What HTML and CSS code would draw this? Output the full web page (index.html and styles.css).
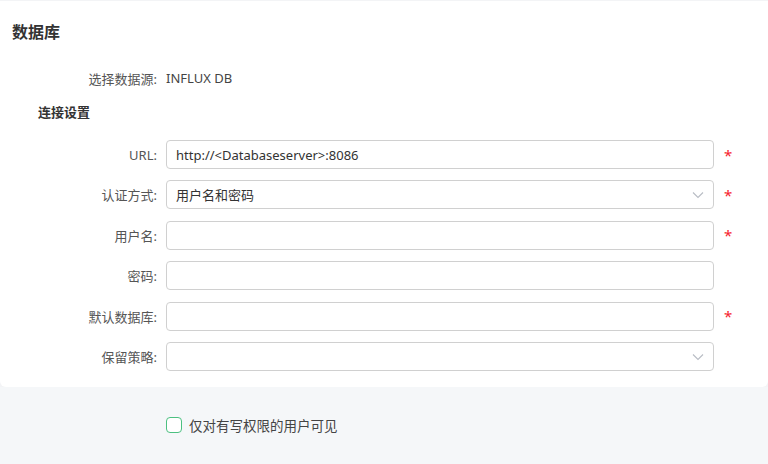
FILE: index.html
```html
<!DOCTYPE html>
<html>
<head>
<meta charset="utf-8">
<link rel="stylesheet" href="styles.css">
</head>
<body>
<div class="page">
  <div class="card">
    <h2 class="title">数据库</h2>
    <div class="source-row">
      <span class="label">选择数据源:</span>
      <span class="source-value">INFLUX DB</span>
    </div>
    <h3 class="section">连接设置</h3>
    <div class="form">
      <div class="row">
        <span class="label">URL:</span>
        <div class="input"><span class="value">http://&lt;Databaseserver&gt;:8086</span></div>
        <span class="req">*</span>
      </div>
      <div class="row">
        <span class="label">认证方式:</span>
        <div class="input select"><span class="value">用户名和密码</span>
          <svg class="arrow" width="12" height="8" viewBox="0 0 12 8"><path d="M1 1.5 L6 6.5 L11 1.5" fill="none" stroke="#b8bcc4" stroke-width="1.1"/></svg>
        </div>
        <span class="req">*</span>
      </div>
      <div class="row">
        <span class="label">用户名:</span>
        <div class="input"></div>
        <span class="req">*</span>
      </div>
      <div class="row">
        <span class="label">密码:</span>
        <div class="input"></div>
        <span class="req"></span>
      </div>
      <div class="row">
        <span class="label">默认数据库:</span>
        <div class="input"></div>
        <span class="req">*</span>
      </div>
      <div class="row">
        <span class="label">保留策略:</span>
        <div class="input select">
          <svg class="arrow" width="12" height="8" viewBox="0 0 12 8"><path d="M1 1.5 L6 6.5 L11 1.5" fill="none" stroke="#b8bcc4" stroke-width="1.1"/></svg>
        </div>
        <span class="req"></span>
      </div>
    </div>
  </div>
  <div class="footer">
    <label class="check"><span class="box"></span><span class="check-text">仅对有写权限的用户可见</span></label>
  </div>
</div>
</body>
</html>
```
FILE: styles.css
```css
* { box-sizing: border-box; }
html, body { margin: 0; padding: 0; }
body {
  background: #f5f7f9;
  font-family: "Noto Sans", "Noto Sans CJK SC", sans-serif;
  font-size: 13px;
  color: #333;
}
.page { width: 768px; height: 464px; padding-top: 1px; background: #f3f4f6; display: flex; flex-direction: column; }
.card {
  background: #fff;
  border-radius: 0 0 6px 6px;
  padding: 20px 0 0 0;
  height: 386px;
}
.title {
  margin: 0 0 0 12px;
  font-size: 16px;
  font-weight: bold;
  color: #333;
  line-height: 22px;
}
.source-row {
  display: flex;
  align-items: center;
  margin-top: 26px;
  height: 18px;
}
.label {
  width: 157px;
  text-align: right;
  color: #555;
  flex: none;
}
.source-value { margin-left: 9px; color: #444; }
.section {
  margin: 16px 0 0 38px;
  font-size: 13px;
  font-weight: bold;
  color: #333;
  line-height: 18px;
}
.form {
  margin-top: 19px;
  display: flex;
  flex-direction: column;
  gap: 11.4px;
}
.row { display: flex; align-items: center; height: 29px; }
.input {
  margin-left: 9px;
  width: 548px;
  height: 29px;
  border: 1px solid #d0d0d0;
  border-radius: 4px;
  display: flex;
  align-items: center;
  padding: 0 9px;
  position: relative;
}
.value { color: #333; }
.select .arrow { position: absolute; right: 9px; top: 10px; }
.req {
  margin-left: 10px;
  color: #f5222d;
  font-size: 15px;
  font-weight: normal;
  line-height: 1;
  padding-top: 1px;
}
.footer {
  flex: 1;
  background: #f5f7f9;
  padding-top: 28px;
}
.check {
  display: flex;
  align-items: center;
  margin-left: 166px;
}
.box {
  width: 16px;
  height: 16px;
  border: 1.5px solid #4cc081;
  border-radius: 4px;
  background: #fff;
}
.check-text { margin-left: 7px; color: #444; font-size: 13.5px; }
```
